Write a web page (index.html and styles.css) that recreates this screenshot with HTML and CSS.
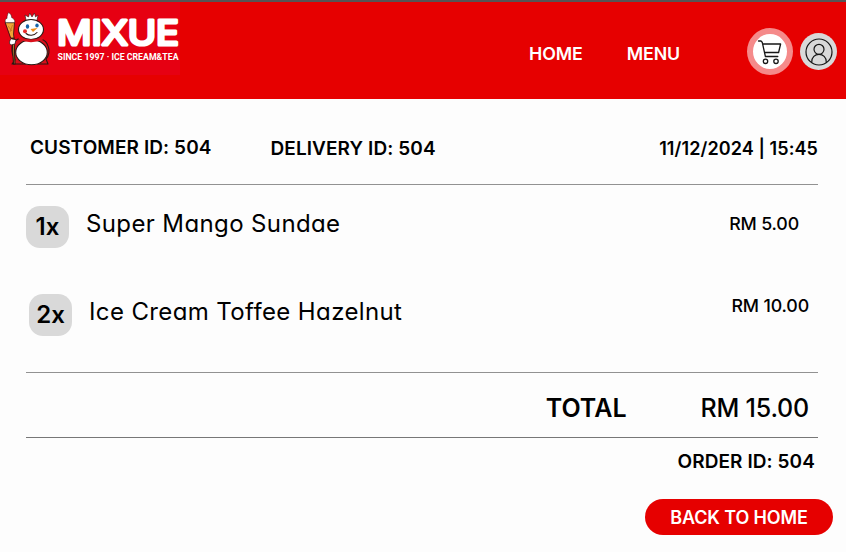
FILE: index.html
```html
<!DOCTYPE html>
<html lang="en">
<head>
<meta charset="utf-8">
<title>Mixue order receipt</title>
<link rel="stylesheet" href="styles.css">
</head>
<body>
<header class="header">
  <svg class="logo" viewBox="0 0 180 73" width="180" height="73" role="img" aria-label="Mixue">
    <rect width="180" height="73" fill="#e60012"/>
    <g stroke="#2b1712" stroke-width="1.1" stroke-linejoin="round" stroke-linecap="round">
      <path d="M18 37c-4 2-7 7-6 12 0 4 2 6 3 9l-3 4h36l-2-5c3-3 4-9 2-13-1-4-4-6-7-7z" fill="#d9101b"/>
      <path d="M12 36l1.500 26 1.500 0L14 36z" fill="#d89431"/>
      <path d="M5.500 20.500h9L13.500 32l.5 4h-3z" fill="#f0a536" stroke-width=".8"/>
      <path d="M5.500 20.500c-1-3 .5-4 1.500-4 0-3 1-5 1.600-6 2 1 3 3 3 5 2 1 4 3 2.900 5z" fill="#fff" stroke-width=".5"/>
      <path d="M26 18l-1-5 3.500 2 1.200-4 2.300 4 2.500-4 1 4 2.500-2-1 5z" fill="#fff" stroke-width=".6"/>
      <ellipse cx="31" cy="27.500" rx="12.500" ry="10" fill="#fff"/>
      <ellipse cx="31.500" cy="50.300" rx="15.800" ry="12.500" fill="#fff"/>
      <path d="M20 36.500c7 3 15 3 22 0" fill="none" stroke="#d9101b" stroke-width="2.600"/>
      <path d="M11 37c-2 2-2 5 0 6l4-1 1-4z" fill="#fff" stroke-width=".8"/>
      <path d="M26 31.500c3 2.500 8 2.500 11-1" fill="none"/>
    </g>
    <ellipse cx="27.500" cy="24.500" rx="1.700" ry="2.200" fill="#1764a8"/>
    <ellipse cx="37" cy="23.500" rx="1.700" ry="2.100" fill="#1764a8"/>
    <path d="M30.500 27l7-1-4.500 4z" fill="#ef8c16"/>
    <circle cx="25" cy="29.300" r="2" fill="#e72d2b"/>
    <path d="M8 24l4 5M12.500 23L10 30" stroke="#b96a1c" stroke-width=".7"/>
    <text class="logo-name" x="57" y="43.200" textLength="122" lengthAdjust="spacingAndGlyphs">MIXUE</text>
    <text class="logo-tag" x="57.500" y="57.600" textLength="121" lengthAdjust="spacingAndGlyphs">SINCE 1997 · ICE CREAM&amp;TEA</text>
  </svg>
  <nav class="nav">
    <a class="nav-link">HOME</a>
    <a class="nav-link">MENU</a>
  </nav>
  <div class="actions">
    <span class="cart">
      <svg width="26" height="26" viewBox="0 0 26 26" fill="none" stroke="#161616" stroke-width="1.300" stroke-linecap="round" stroke-linejoin="round">
        <path d="M1.500 2H4l1.200 1.200 3.200 14.300h12.400M5.600 5h18l-2 8.500H7.600"/>
        <circle cx="8.500" cy="22.300" r="2.200"/><circle cx="19" cy="22.300" r="2.200"/>
      </svg>
    </span>
    <span class="user">
      <svg width="28" height="28" viewBox="0 0 28 28" fill="none" stroke="#161616" stroke-width="1.200">
        <circle cx="14" cy="14" r="13"/><circle cx="14" cy="11.300" r="5"/>
        <path d="M6.800 24.600v-1c0-4.300 3-7.300 7.200-7.300s7.200 3 7.200 7.300v1"/>
      </svg>
    </span>
  </div>
</header>
<main class="receipt">
  <section class="meta">
    <span class="customer">CUSTOMER ID: 504</span>
    <span class="delivery">DELIVERY ID: 504</span>
    <time class="date">11/12/2024 | 15:45</time>
  </section>
  <section class="items">
    <div class="item">
      <span class="qty">1x</span>
      <span class="name">Super Mango Sundae</span>
      <span class="price">RM 5.00</span>
    </div>
    <div class="item item-second">
      <span class="qty">2x</span>
      <span class="name">Ice Cream Toffee Hazelnut</span>
      <span class="price price-second">RM 10.00</span>
    </div>
  </section>
  <section class="total">
    <span class="total-label">TOTAL</span>
    <span class="total-value">RM 15.00</span>
  </section>
  <p class="order">ORDER ID: 504</p>
  <a class="back">BACK TO HOME</a>
</main>
</body>
</html>
```
FILE: styles.css
```css
* { box-sizing: border-box; }
body {
  margin: 0;
  height: 552px;
  overflow: hidden;
  background: #fdfdfd;
  color: #000;
  font-family: Inter, "Liberation Sans", sans-serif;
  white-space: nowrap;
}
.header {
  display: flex;
  height: 99px;
  border-top: 2px solid #555;
  background: #e60000;
}
.logo { flex: none; }
.logo-name {
  font-family: Inter, sans-serif;
  font-size: 34.5px;
  font-weight: 400;
  fill: #fff;
  stroke: #fff;
  stroke-width: 3.2px;
  stroke-linejoin: round;
}
.logo-tag { font-family: Roboto, sans-serif; font-size: 8.8px; font-weight: 700; fill: #fff; }
.nav {
  display: flex;
  gap: 44px;
  margin-left: 349px;
  padding-top: 40px;
}
.nav-link {
  color: #fff;
  font-size: 17.8px;
  font-weight: 600;
  letter-spacing: -0.1px;
  line-height: 24px;
}
.actions {
  display: flex;
  gap: 7px;
  margin: 26px 9px 0 auto;
}
.cart, .user {
  display: flex;
  align-items: center;
  justify-content: center;
  border-radius: 50%;
}
.cart {
  width: 46px;
  height: 47px;
  border: 6px solid #f58a8a;
  background: #fff;
}
.user {
  width: 37px;
  height: 37px;
  margin-top: 5px;
  background: #d9d9d9;
}
.receipt { padding: 0 28px 0 26px; }
.meta {
  display: flex;
  height: 86px;
  padding: 39px 0 0 4px;
  border-bottom: 1px solid #929292;
  font-size: 19px;
  font-weight: 600;
  letter-spacing: 0.09px;
  line-height: 20px;
}
.delivery { margin: 1px 0 0 59px; }
.date { margin: 1px 0 0 auto; font-size: 18px; }
.items {
  height: 188px;
  padding-top: 21px;
  border-bottom: 1px solid #929292;
}
.item { display: flex; height: 88px; }
.item-second { padding-left: 3px; }
.qty {
  width: 43px;
  height: 42px;
  border-radius: 14px;
  background: #d9d9d9;
  font-size: 24px;
  font-weight: 600;
  line-height: 42px;
  text-align: center;
}
.name {
  margin-left: 17px;
  font-size: 24px;
  font-feature-settings: "cv11" 1;
  letter-spacing: 0.38px;
  line-height: 36px;
}
.price {
  margin: 6px 19px 0 auto;
  font-size: 17.8px;
  font-weight: 500;
  letter-spacing: -0.15px;
  line-height: 24px;
}
.price-second { margin: 0 9px 0 auto; line-height: 23px; }
.total {
  display: flex;
  justify-content: flex-end;
  height: 65px;
  padding: 19px 9px 0 0;
  border-bottom: 1px solid #777;
  font-size: 25px;
  line-height: 33px;
}
.total-label { margin-right: 74px; font-weight: 600; }
.total-value { font-weight: 500; letter-spacing: -0.2px; }
.order {
  margin: 12px 3px 0 0;
  font-size: 19px;
  font-weight: 600;
  letter-spacing: 0.09px;
  line-height: 24px;
  text-align: right;
}
.back {
  display: block;
  width: 188px;
  height: 36px;
  margin: 25px -15px 0 auto;
  border-radius: 18px;
  background: #e60000;
  color: #fff;
  font-size: 18px;
  font-weight: 600;
  letter-spacing: -0.15px;
  line-height: 37px;
  text-align: center;
}
```
